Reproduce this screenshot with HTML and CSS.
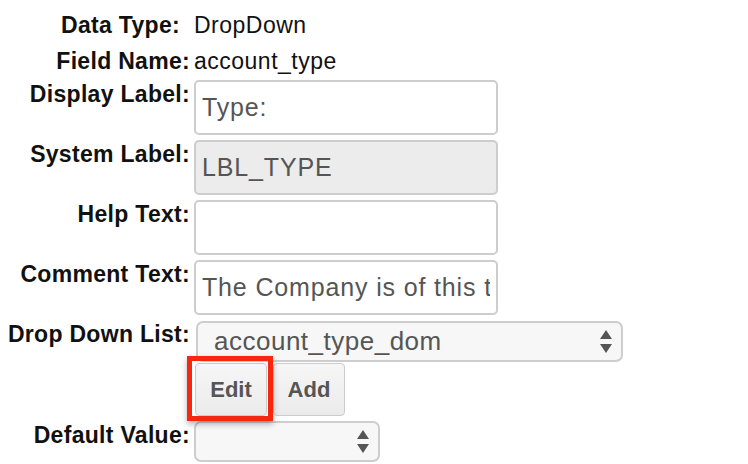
FILE: index.html
```html
<!DOCTYPE html>
<html lang="en">
<head>
<meta charset="utf-8">
<title>Field Editor</title>
<link rel="stylesheet" href="styles.css">
</head>
<body>
<div class="form">
  <div class="row row-text first">
    <div class="lbl lbl-wide">Data Type:</div>
    <div class="val">DropDown</div>
  </div>
  <div class="row row-text second">
    <div class="lbl">Field Name:</div>
    <div class="val">account_type</div>
  </div>
  <div class="row">
    <div class="lbl lbl-field">Display Label:</div>
    <input class="txt" type="text" value="Type:">
  </div>
  <div class="row">
    <div class="lbl lbl-field">System Label:</div>
    <input class="txt txt-disabled" type="text" value="LBL_TYPE" disabled>
  </div>
  <div class="row">
    <div class="lbl lbl-field">Help Text:</div>
    <input class="txt" type="text" value="">
  </div>
  <div class="row">
    <div class="lbl lbl-field">Comment Text:</div>
    <input class="txt" type="text" value="The Company is of this type">
  </div>
  <div class="row">
    <div class="lbl lbl-select">Drop Down List:</div>
    <div class="stack">
      <div class="sel sel-wide">
        <span class="sel-text">account_type_dom</span>
        <svg class="arrows" width="12" height="23" viewBox="0 0 12 23"><path d="M6 0 L12 9 L0 9 Z" fill="#555"/><path d="M0 14 L12 14 L6 23 Z" fill="#555"/></svg>
      </div>
      <div class="btns">
        <div class="btn-wrap">
          <button class="btn btn-edit" type="button">Edit</button>
          <span class="highlight"></span>
        </div>
        <button class="btn btn-add" type="button">Add</button>
      </div>
    </div>
  </div>
  <div class="row row-last">
    <div class="lbl lbl-select">Default Value:</div>
    <div class="sel sel-small">
      <span class="sel-text"></span>
      <svg class="arrows" width="12" height="23" viewBox="0 0 12 23"><path d="M6 0 L12 9 L0 9 Z" fill="#555"/><path d="M0 14 L12 14 L6 23 Z" fill="#555"/></svg>
    </div>
  </div>
</div>
</body>
</html>
```
FILE: styles.css
```css
html, body {
  margin: 0;
  padding: 0;
  background: #ffffff;
}

body {
  font-family: "Liberation Sans", Arial, Helvetica, sans-serif;
  color: #000;
  width: 748px;
  height: 464px;
  overflow: hidden;
}

.form {
  display: flex;
  flex-direction: column;
  padding-top: 12px;
}

.row {
  display: flex;
  align-items: flex-start;
  gap: 4px;
  margin-top: 5px;
}

.row.first {
  margin-top: 0;
}

.row.second {
  margin-top: 10px;
}

.row.second + .row {
  margin-top: 6px;
}

.lbl {
  width: 190px;
  flex: none;
  text-align: right;
  font-weight: bold;
  font-size: 23px;
  line-height: 26px;
  letter-spacing: 0.3px;
  color: #111;
  white-space: nowrap;
}

.lbl-wide {
  padding-right: 10px;
  box-sizing: border-box;
}

.lbl-field {
  padding-top: 1px;
}

.lbl-select {
  padding-top: 1px;
}

.val {
  font-size: 23px;
  line-height: 26px;
  letter-spacing: 0.5px;
  color: #111;
}

.txt {
  box-sizing: border-box;
  width: 304px;
  height: 55px;
  margin: 0;
  padding: 0 6px;
  border: 2px solid #cdcdcd;
  border-radius: 5px;
  background: #fff;
  font-family: "Liberation Sans", Arial, Helvetica, sans-serif;
  font-size: 25px;
  letter-spacing: 0.85px;
  color: #555;
  outline: none;
}

.txt-disabled {
  background: #ececec;
  color: #555;
  -webkit-text-fill-color: #555;
  opacity: 1;
}

.stack {
  display: flex;
  flex-direction: column;
  align-items: flex-start;
}

.sel {
  box-sizing: border-box;
  height: 41px;
  display: flex;
  align-items: center;
  justify-content: space-between;
  border: 2px solid #cdcdcd;
  border-radius: 7px;
  background: #f7f7f7;
  padding: 0 9px 0 16px;
  font-size: 26px;
  letter-spacing: 0.5px;
  color: #555;
}

.sel-wide {
  width: 427px;
  margin-top: 1px;
  margin-left: 2px;
}

.sel-small {
  width: 186px;
}

.arrows {
  flex: none;
}

.btns {
  display: flex;
  gap: 6px;
  margin-top: 1px;
}

.btn-wrap {
  position: relative;
  display: flex;
}

.btn {
  box-sizing: border-box;
  height: 53px;
  margin: 0;
  padding: 0;
  border: 1px solid #cbcbcb;
  border-radius: 4px;
  background: linear-gradient(#f6f6f6, #ebebeb);
  font-family: "Liberation Sans", Arial, Helvetica, sans-serif;
  font-weight: bold;
  font-size: 22px;
  color: #555;
}

.btn-edit {
  width: 72px;
  margin-left: 1px;
}

.btn-add {
  width: 72px;
}

.highlight {
  position: absolute;
  left: -7px;
  top: -7px;
  width: 86px;
  height: 65px;
  box-sizing: border-box;
  border: 5px solid #f5270f;
  box-shadow: 0 3px 6px rgba(0, 0, 0, 0.3);
  pointer-events: none;
}
```
